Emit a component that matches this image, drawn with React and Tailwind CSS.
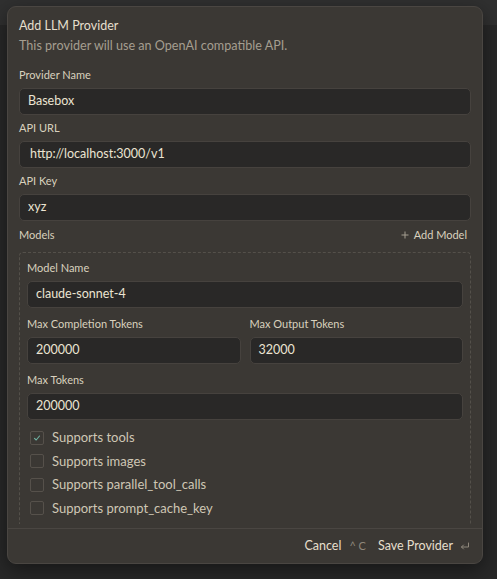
import React from 'react';

const Label = ({ children }) => (
  <div className="text-[11px] leading-[16px] text-[#d9d1be]">{children}</div>
);

const Field = ({ label, value, pad = 'px-[8px]' }) => (
  <div className="flex flex-col gap-[5px]">
    <Label>{label}</Label>
    <div className={`h-[27px] rounded-[5px] border border-[#46423e] bg-[#292827] ${pad} flex items-center text-[12.5px] text-[#ebe4d2]`}>
      {value}
    </div>
  </div>
);

const Checkbox = ({ label, checked }) => (
  <div className="flex h-[23.5px] items-center gap-[8px] pl-[3px]">
    <div className="flex h-[14px] w-[14px] items-center justify-center rounded-[2px] border border-[#56514b]">
      {checked && (
        <svg width="8" height="8" viewBox="0 0 8 8" fill="none">
          <path d="M1.5 4.3 L3.2 6 L6.5 2" stroke="#6fb3a3" strokeWidth="1.1" strokeLinecap="round" strokeLinejoin="round" />
        </svg>
      )}
    </div>
    <span className="text-[13px] text-[#cfc7b4]">{label}</span>
  </div>
);

export default function App() {
  return (
    <div className="relative h-[579px] w-[497px] overflow-hidden bg-[#282828] font-['Lato',sans-serif]">
      <div className="h-[25px] bg-[#303030]" />

      <div className="absolute left-[7px] top-[6px] flex h-[558px] w-[476px] flex-col rounded-[9px] border border-[#4a4642] bg-[#3b3834] shadow-[0_6px_20px_rgba(0,0,0,0.45)]">
        <div className="flex h-[517px] flex-col overflow-hidden px-[11px] pt-[9px]">
          <div className="text-[12.5px] leading-[20px] text-[#e6dfcd]">Add LLM Provider</div>
          <div className="text-[12.6px] leading-[20px] text-[#a59e90]">This provider will use an OpenAI compatible API.</div>

          <div className="mt-[11px] flex flex-col gap-[5px]">
            <Field label="Provider Name" value="Basebox" />
            <Field label="API URL" value="http://localhost:3000/v1" pad="px-[10px]" />
            <Field label="API Key" value="xyz" />
          </div>

          <div className="mt-[6px] flex items-center justify-between pr-[4px]">
            <Label>Models</Label>
            <div className="flex items-center gap-[5px] text-[11px] leading-[16px] text-[#d9d1be]">
              <svg width="8" height="8" viewBox="0 0 8 8" fill="none">
                <path d="M4 0.5 V7.5 M0.5 4 H7.5" stroke="#a59e90" strokeWidth="1" />
              </svg>
              Add Model
            </div>
          </div>

          <div className="mt-[9px] shrink-0 rounded-[4px] border border-dashed border-[#54504a] px-[7px] pt-[7px]">
            <div className="flex flex-col gap-[8px]">
              <Field label="Model Name" value="claude-sonnet-4" />
              <div className="grid grid-cols-2 gap-[9px]">
                <Field label="Max Completion Tokens" value="200000" />
                <Field label="Max Output Tokens" value="32000" />
              </div>
              <Field label="Max Tokens" value="200000" />
            </div>
            <div className="mt-[6px] flex flex-col">
              <Checkbox label="Supports tools" checked />
              <Checkbox label="Supports images" />
              <Checkbox label="Supports parallel_tool_calls" />
              <Checkbox label="Supports prompt_cache_key" />
              <div className="h-[40px]" />
            </div>
          </div>
        </div>

        <div className="mt-[4px] flex flex-1 items-center justify-end gap-[12px] border-t border-[#4a4642] pr-[12px]">
          <div className="flex items-center gap-[8px]">
            <span className="text-[12.5px] text-[#e6dfcd]">Cancel</span>
            <span className="text-[11px] text-[#8e877b]">^ C</span>
          </div>
          <div className="flex items-center gap-[7px]">
            <span className="text-[12.5px] text-[#e6dfcd]">Save Provider</span>
            <svg width="10" height="9" viewBox="0 0 10 9" fill="none">
              <path d="M8.5 1 V5 H1.5 M3.5 3 L1.5 5 L3.5 7" stroke="#8e877b" strokeWidth="1" strokeLinecap="round" strokeLinejoin="round" />
            </svg>
          </div>
        </div>
      </div>
    </div>
  );
}
